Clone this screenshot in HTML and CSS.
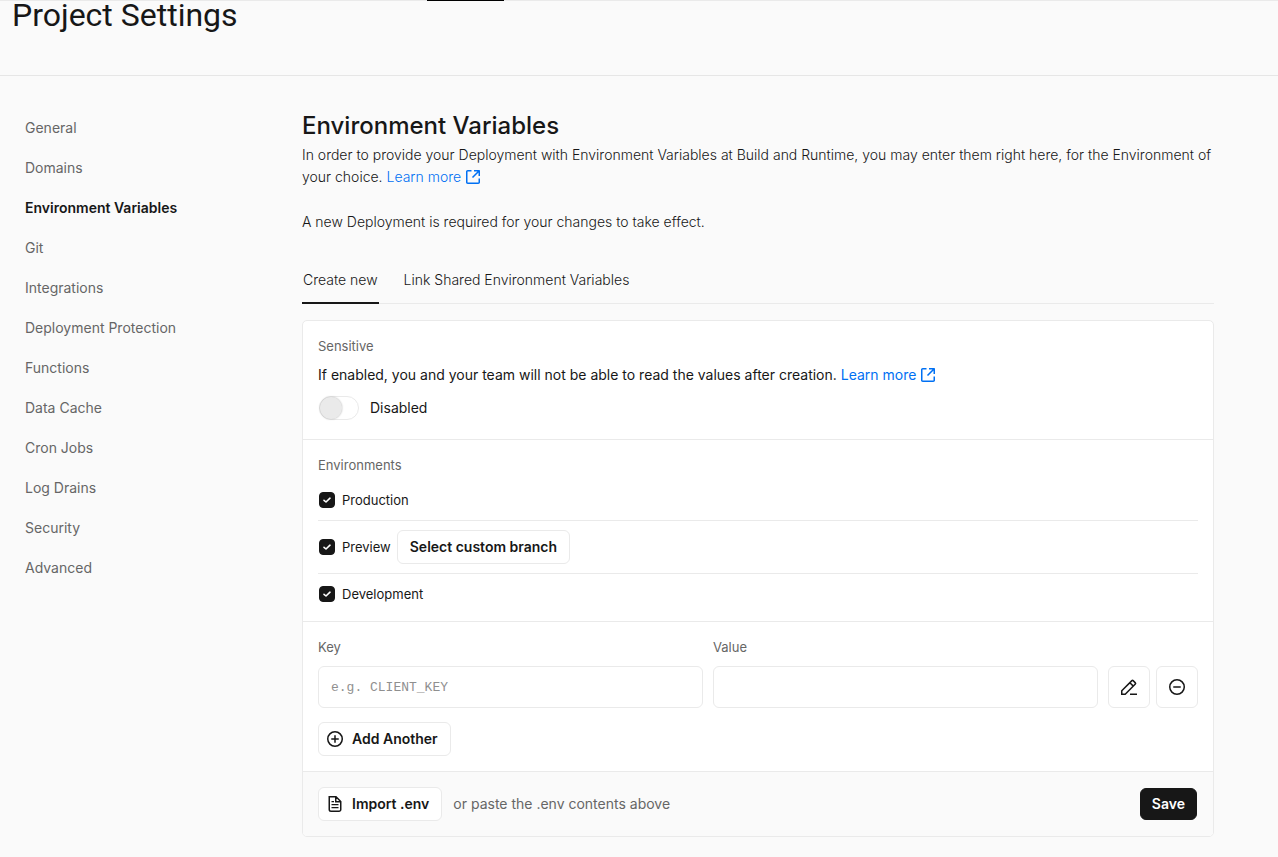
FILE: index.html
```html
<!DOCTYPE html>
<html lang="en">
<head>
<meta charset="utf-8">
<meta name="viewport" content="width=device-width, initial-scale=1">
<title>Project Settings</title>
<link rel="stylesheet" href="styles.css">
</head>
<body>
<svg class="sprite" aria-hidden="true">
  <symbol id="external" viewBox="0 0 16 16"><path fill="currentColor" d="M13.5 10.25V13.25C13.5 13.39 13.39 13.5 13.25 13.5H2.75C2.61 13.5 2.5 13.39 2.5 13.25V2.75C2.5 2.61 2.61 2.5 2.75 2.5H6.5V1H2.75C1.78 1 1 1.78 1 2.75V13.25C1 14.22 1.78 15 2.75 15H13.25C14.22 15 15 14.22 15 13.25V9.5H13.5ZM9 1H14.25C14.66 1 15 1.34 15 1.75V7H13.5V3.56L8 9.06L6.94 8L12.44 2.5H9Z"/></symbol>
  <symbol id="check" viewBox="0 0 16 16"><path d="M5 8.3L7 10L11 6.2" fill="none" stroke="currentColor" stroke-width="1.6" stroke-linecap="round" stroke-linejoin="round"/></symbol>
  <symbol id="plus" viewBox="0 0 16 16"><path d="M8 .75a7.25 7.25 0 1 1 0 14.5a7.25 7.25 0 0 1 0-14.5ZM8 4.25v7.5M4.25 8h7.5" fill="none" stroke="currentColor" stroke-width="1.5"/></symbol>
  <symbol id="minus" viewBox="0 0 16 16"><path d="M8 .75a7.25 7.25 0 1 1 0 14.5a7.25 7.25 0 0 1 0-14.5ZM4.25 8h7.5" fill="none" stroke="currentColor" stroke-width="1.5"/></symbol>
  <symbol id="pencil" viewBox="0 0 16 16"><path d="M.75 15.25V11.8L10.9 1.65a.9.9 0 0 1 1.25 0L14.35 3.85a.9.9 0 0 1 0 1.25L4.2 15.25ZM8.9 3.7l3.4 3.4M9 15.25h7" fill="none" stroke="currentColor" stroke-width="1.5"/></symbol>
  <symbol id="file" viewBox="0 0 16 16"><path d="M2.25.75H9L13.75 5.5V13.5a1.75 1.75 0 0 1-1.75 1.75H4a1.75 1.75 0 0 1-1.75-1.75ZM8.75.75V5.75H13.75" fill="none" stroke="currentColor" stroke-width="1.5"/><path d="M4.5 5.6H7M4.5 8.6h7M4.5 11.6h7" fill="none" stroke="currentColor" stroke-width="1.2"/></symbol>
</svg>

<header class="header">
  <div class="top-line"><span class="top-marker"></span></div>
  <h1 class="page-title">Project Settings</h1>
</header>

<div class="layout">
  <nav class="sidebar" aria-label="Settings">
    <a href="#">General</a>
    <a href="#">Domains</a>
    <a href="#" class="active" aria-current="page">Environment Variables</a>
    <a href="#">Git</a>
    <a href="#">Integrations</a>
    <a href="#">Deployment Protection</a>
    <a href="#">Functions</a>
    <a href="#">Data Cache</a>
    <a href="#">Cron Jobs</a>
    <a href="#">Log Drains</a>
    <a href="#">Security</a>
    <a href="#">Advanced</a>
  </nav>

  <main class="content">
    <h2 class="section-title">Environment Variables</h2>
    <p class="intro">In order to provide your Deployment with Environment Variables at Build and Runtime, you may enter them right here, for the Environment of your choice. <a class="link" href="#">Learn more <svg class="icon"><use href="#external"/></svg></a></p>
    <p class="intro note">A new Deployment is required for your changes to take effect.</p>

    <div class="tabs" role="tablist">
      <button class="tab selected" role="tab" aria-selected="true">Create new</button>
      <button class="tab" role="tab" aria-selected="false">Link Shared Environment Variables</button>
    </div>

    <form class="card">
      <section class="panel sensitive">
        <h3 class="label">Sensitive</h3>
        <p class="text">If enabled, you and your team will not be able to read the values after creation. <a class="link" href="#">Learn more <svg class="icon"><use href="#external"/></svg></a></p>
        <label class="toggle-row"><input class="toggle" type="checkbox" role="switch"><span>Disabled</span></label>
      </section>

      <section class="panel environments">
        <h3 class="label">Environments</h3>
        <div class="env env-first">
          <label class="check"><span class="box"><input type="checkbox" checked><svg class="icon"><use href="#check"/></svg></span>Production</label>
        </div>
        <div class="env env-tall">
          <label class="check"><span class="box"><input type="checkbox" checked><svg class="icon"><use href="#check"/></svg></span>Preview</label>
          <button class="button" type="button">Select custom branch</button>
        </div>
        <div class="env">
          <label class="check"><span class="box"><input type="checkbox" checked><svg class="icon"><use href="#check"/></svg></span>Development</label>
        </div>
      </section>

      <section class="panel variables">
        <div class="fields">
          <div class="field">
            <label class="label" for="key">Key</label>
            <input class="input" id="key" type="text" placeholder="e.g. CLIENT_KEY">
          </div>
          <div class="field">
            <label class="label" for="value">Value</label>
            <input class="input" id="value" type="text">
          </div>
          <div class="actions">
            <button class="button square" type="button" aria-label="Add note"><svg class="icon"><use href="#pencil"/></svg></button>
            <button class="button square" type="button" aria-label="Remove"><svg class="icon"><use href="#minus"/></svg></button>
          </div>
        </div>
        <button class="button with-icon" type="button"><svg class="icon"><use href="#plus"/></svg>Add Another</button>
      </section>

      <footer class="footer">
        <button class="button with-icon" type="button"><svg class="icon"><use href="#file"/></svg>Import .env</button>
        <span class="hint">or paste the .env contents above</span>
        <button class="button primary" type="submit">Save</button>
      </footer>
    </form>
  </main>
</div>
</body>
</html>
```

FILE: styles.css
```css
* {
  box-sizing: border-box;
}

body {
  margin: 0;
  background: #fafafa;
  color: #171717;
  font: 14px/22px Inter, "Liberation Sans", sans-serif;
}

h1, h2, h3, p {
  margin: 0;
}

button, input {
  font: inherit;
  color: inherit;
  margin: 0;
}

a {
  text-decoration: none;
}

.sprite {
  display: none;
}

.icon {
  width: 16px;
  height: 16px;
  flex: none;
}

.header {
  border-bottom: 1px solid #e6e6e6;
  padding-bottom: 46px;
}

.top-line {
  height: 1px;
  padding-left: 427px;
  background: #eaeaea;
}

.top-marker {
  display: block;
  width: 77px;
  height: 1px;
  background: #000;
}

.page-title {
  padding-left: 12px;
  font-family: Roboto, "Liberation Sans", sans-serif;
  font-size: 32px;
  line-height: 28px;
  font-weight: 400;
}

.layout {
  display: flex;
  padding: 32px 64px 20px 25px;
}

.sidebar {
  width: 277px;
  flex: none;
  display: flex;
  flex-direction: column;
}

.sidebar a {
  line-height: 40px;
  color: #666;
}

.sidebar .active {
  color: #171717;
  font-weight: 600;
}

.content {
  flex: 1;
  min-width: 0;
}

.section-title {
  font-size: 24px;
  line-height: 36px;
  font-weight: 500;
}

.intro {
  font-weight: 300;
}

.link {
  color: #0070f3;
  white-space: nowrap;
}

.link .icon {
  vertical-align: -3px;
}

.note {
  margin-top: 23px;
}

.tabs {
  display: flex;
  gap: 24px;
  margin: 24px 0 16px;
  border-bottom: 1px solid #eaeaea;
}

.tab {
  height: 47px;
  margin-bottom: -1px;
  padding: 0 1px;
  border: 0;
  border-bottom: 2px solid transparent;
  background: none;
  font-weight: 300;
}

.tab.selected {
  border-color: #171717;
}

.card {
  border: 1px solid #eaeaea;
  border-radius: 5px;
  background: #fff;
  overflow: hidden;
}

.panel {
  padding: 15px;
  border-bottom: 1px solid #eaeaea;
}

.label {
  display: block;
  color: #666;
  font-size: 13px;
  line-height: 20px;
  font-weight: 400;
}

.sensitive {
  padding-bottom: 19px;
}

.text {
  margin: 8px 0 10px;
}

.toggle-row {
  display: flex;
  align-items: center;
  gap: 11px;
  width: max-content;
  padding-left: 1px;
}

.toggle {
  appearance: none;
  width: 40px;
  height: 24px;
  border: 1px solid #eaeaea;
  border-radius: 12px;
}

.toggle::before {
  content: "";
  display: block;
  width: 22px;
  height: 22px;
  border-radius: 50%;
  background: #eaeaea;
  box-shadow: 0 0 2px rgba(0, 0, 0, .3);
}

.toggle:checked::before {
  margin-left: 16px;
}

.environments {
  padding-bottom: 7px;
}

.env {
  display: flex;
  align-items: center;
  gap: 6px;
  height: 41px;
}

.env + .env {
  border-top: 1px solid #eaeaea;
}

.env-first {
  height: 45px;
  padding-top: 4px;
}

.env + .env-tall {
  height: 53px;
}

.check {
  display: flex;
  align-items: center;
  gap: 7px;
  padding-left: 1px;
  font-size: 13px;
}

.box {
  display: grid;
  color: #fff;
}

.box > * {
  grid-area: 1 / 1;
}

.box .icon {
  pointer-events: none;
}

.box input {
  appearance: none;
  width: 16px;
  height: 16px;
  border: 1px solid #171717;
  border-radius: 4px;
}

.box input:checked {
  background: #171717;
}

.fields {
  display: flex;
  align-items: flex-end;
  gap: 10px;
  margin-bottom: 14px;
}

.field {
  flex: 1;
  min-width: 0;
}

.input {
  display: block;
  width: 100%;
  height: 42px;
  margin-top: 9px;
  padding: 0 12px;
  border: 1px solid #eaeaea;
  border-radius: 6px;
  background: #fff;
  font-family: "Liberation Mono", monospace;
  font-size: 13px;
}

.input::placeholder {
  color: #8f8f8f;
}

.actions {
  display: flex;
  gap: 6px;
}

.button {
  display: flex;
  align-items: center;
  justify-content: center;
  height: 34px;
  padding: 0 12px;
  border: 1px solid #eaeaea;
  border-radius: 6px;
  background: #fff;
  font-weight: 600;
}

.square {
  width: 42px;
  height: 42px;
  padding: 0;
}

.with-icon {
  gap: 9px;
  padding: 0 12px 0 8px;
}

.footer {
  display: flex;
  align-items: center;
  gap: 11px;
  padding: 15px 16px 15px 15px;
  background: #fafafa;
}

.hint {
  color: #666;
}

.primary {
  height: 32px;
  padding: 0 11px;
  margin-left: auto;
  border-color: #171717;
  background: #171717;
  color: #fff;
}
```
